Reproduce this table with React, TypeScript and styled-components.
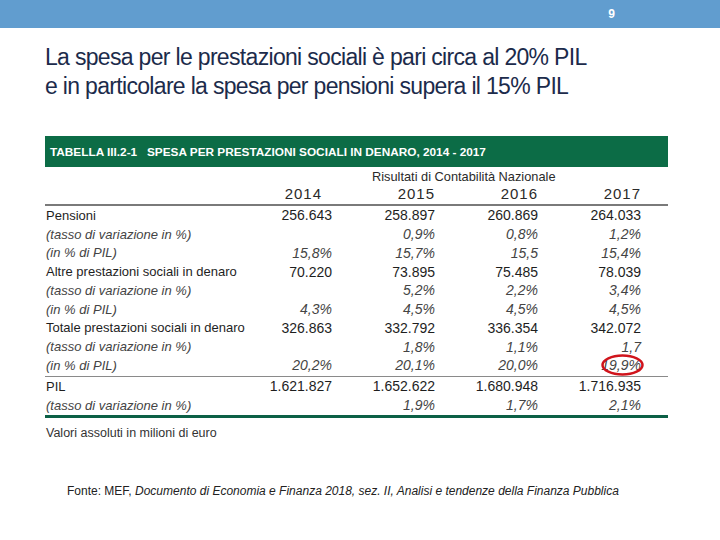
import React from "react";
import styled, { createGlobalStyle } from "styled-components";

const Global = createGlobalStyle`
  html, body { margin: 0; padding: 0; background: #fff; }
  body { width: 720px; height: 540px; overflow: hidden; font-family: "Liberation Sans", Arial, sans-serif; }
`;

const Page = styled.div`
  width: 720px;
  height: 540px;
  display: flex;
  flex-direction: column;
`;

const TopBar = styled.div`
  height: 28px;
  background: #619dcf;
  display: flex;
  align-items: center;
  justify-content: flex-end;
  padding-right: 105px;
  color: #fff;
  font: bold 12px "Liberation Sans", Arial, sans-serif;
`;

const Title = styled.h1`
  margin: 14.5px 0 0 45px;
  font: 400 23px/29.5px "Liberation Sans", Arial, sans-serif;
  letter-spacing: -0.68px;
  color: #1c2b4b;
`;

const TableBox = styled.div`
  margin: 34.5px 0 0 45px;
  width: 623px;
  font-family: "Liberation Sans Narrow", "Liberation Sans", Arial, sans-serif;
  color: #222;
`;

const Band = styled.div`
  height: 31px;
  background: #0c6c46;
  color: #fff;
  display: flex;
  align-items: center;
  padding-left: 5px;
  font: bold 11.8px "Liberation Sans Narrow", "Liberation Sans", Arial, sans-serif;
  white-space: pre;
`;

const Grid = styled.div`
  display: grid;
  grid-template-columns: 184px 103px 103px 103px 103px 27px;
  font-size: 13px;
`;

const Cell = styled.div<{ $italic?: boolean; $num?: boolean; $span?: string; $pad?: number; $right?: boolean; $h?: number }>`
  grid-column: ${(p) => p.$span || "auto"};
  height: ${(p) => p.$h ?? 18.75}px;
  display: flex;
  align-items: center;
  justify-content: ${(p) => (p.$right ? "flex-end" : "flex-start")};
  padding-right: ${(p) => p.$pad ?? 0}px;
  padding-left: ${(p) => (p.$right ? 0 : 1)}px;
  white-space: nowrap;
  font-family: ${(p) => (p.$num ? '"Liberation Sans", Arial, sans-serif' : "inherit")};
  font-size: ${(p) => (p.$num ? "14px" : "inherit")};
  font-style: ${(p) => (p.$italic ? "italic" : "normal")};
  color: ${(p) => (p.$italic ? "#444" : "#1e1e1e")};
  position: relative;
`;

const Caption = styled(Cell)`
  padding-left: 40px;
  font-size: 12.8px;
  color: #2a2a2a;
`;

const Year = styled(Cell)`
  font-family: "Liberation Sans", Arial, sans-serif;
  font-size: 15px;
  letter-spacing: 1px;
  color: #2a2a2a;
`;

const Rule = styled.div<{ $w: number; $c: string; $m?: string }>`
  grid-column: 1 / -1;
  height: ${(p) => p.$w}px;
  background: ${(p) => p.$c};
  margin: ${(p) => p.$m || "0"};
`;

const Note = styled.div`
  font-size: 12.5px;
  color: #333;
  padding: 8px 0 0 1px;
`;

const Circle = styled.svg`
  position: absolute;
  right: -3px;
  top: -2.5px;
  overflow: visible;
`;

const Source = styled.div`
  margin: 44px 0 0 67px;
  font: 12px "Liberation Sans", Arial, sans-serif;
  color: #222;
  em { font-style: italic; }
`;

type Row = { label: string; vals: string[]; italic?: boolean; circle?: number };

const rowsA: Row[] = [
  { label: "Pensioni", vals: ["256.643", "258.897", "260.869", "264.033"] },
  { label: "(tasso di variazione in %)", vals: ["", "0,9%", "0,8%", "1,2%"], italic: true },
  { label: "(in % di PIL)", vals: ["15,8%", "15,7%", "15,5", "15,4%"], italic: true },
  { label: "Altre prestazioni sociali in denaro", vals: ["70.220", "73.895", "75.485", "78.039"] },
  { label: "(tasso di variazione in %)", vals: ["", "5,2%", "2,2%", "3,4%"], italic: true },
  { label: "(in % di PIL)", vals: ["4,3%", "4,5%", "4,5%", "4,5%"], italic: true },
  { label: "Totale prestazioni sociali in denaro", vals: ["326.863", "332.792", "336.354", "342.072"] },
  { label: "(tasso di variazione in %)", vals: ["", "1,8%", "1,1%", "1,7"], italic: true },
  { label: "(in % di PIL)", vals: ["20,2%", "20,1%", "20,0%", "19,9%"], italic: true, circle: 3 },
];

const rowsB: Row[] = [
  { label: "PIL", vals: ["1.621.827", "1.652.622", "1.680.948", "1.716.935"] },
  { label: "(tasso di variazione in %)", vals: ["", "1,9%", "1,7%", "2,1%"], italic: true },
];

const renderRows = (rows: Row[], h: number) =>
  rows.map((r, i) => (
    <React.Fragment key={r.label + i}>
      <Cell $italic={r.italic} $h={h}>{r.label}</Cell>
      {r.vals.map((v, j) => (
        <Cell key={j} $right $num $italic={r.italic} $h={h}>
          {v}
          {r.circle === j && (
            <Circle width="43" height="22" viewBox="0 0 43 22">
              <ellipse cx="21.5" cy="11" rx="20" ry="9.5" fill="none" stroke="#d0141c" strokeWidth="2.5" />
            </Circle>
          )}
        </Cell>
      ))}
      <Cell $h={h} />
    </React.Fragment>
  ));

export default function App() {
  return (
    <Page>
      <Global />
      <TopBar>9</TopBar>
      <Title>
        La spesa per le prestazioni sociali è pari circa al 20% PIL
        <br />
        e in particolare la spesa per pensioni supera il 15% PIL
      </Title>
      <TableBox>
        <Band>{"TABELLA III.2-1   SPESA PER PRESTAZIONI SOCIALI IN DENARO, 2014 - 2017"}</Band>
        <Grid>
          <Caption $span="3 / 7" $h={18}>Risultati di Contabilità Nazionale</Caption>
          <Cell $h={18} />
          <Year $right $pad={10} $h={17}>2014</Year>
          <Year $right $h={17}>2015</Year>
          <Year $right $h={17}>2016</Year>
          <Year $right $h={17}>2017</Year>
          <Cell $h={17} />
          <Rule $w={2} $c="#7a7a7a" $m="1px 0 0 0" />
          {renderRows(rowsA, 18.75)}
          <Rule $w={1} $c="#8a8a8a" $m="1px 0 0 0" />
          {renderRows(rowsB, 19)}
          <Rule $w={3} $c="#0c6046" />
        </Grid>
        <Note>Valori assoluti in milioni di euro</Note>
      </TableBox>
      <Source>
        Fonte: MEF, <em>Documento di Economia e Finanza 2018, sez. II, Analisi e tendenze della Finanza Pubblica</em>
      </Source>
    </Page>
  );
}
